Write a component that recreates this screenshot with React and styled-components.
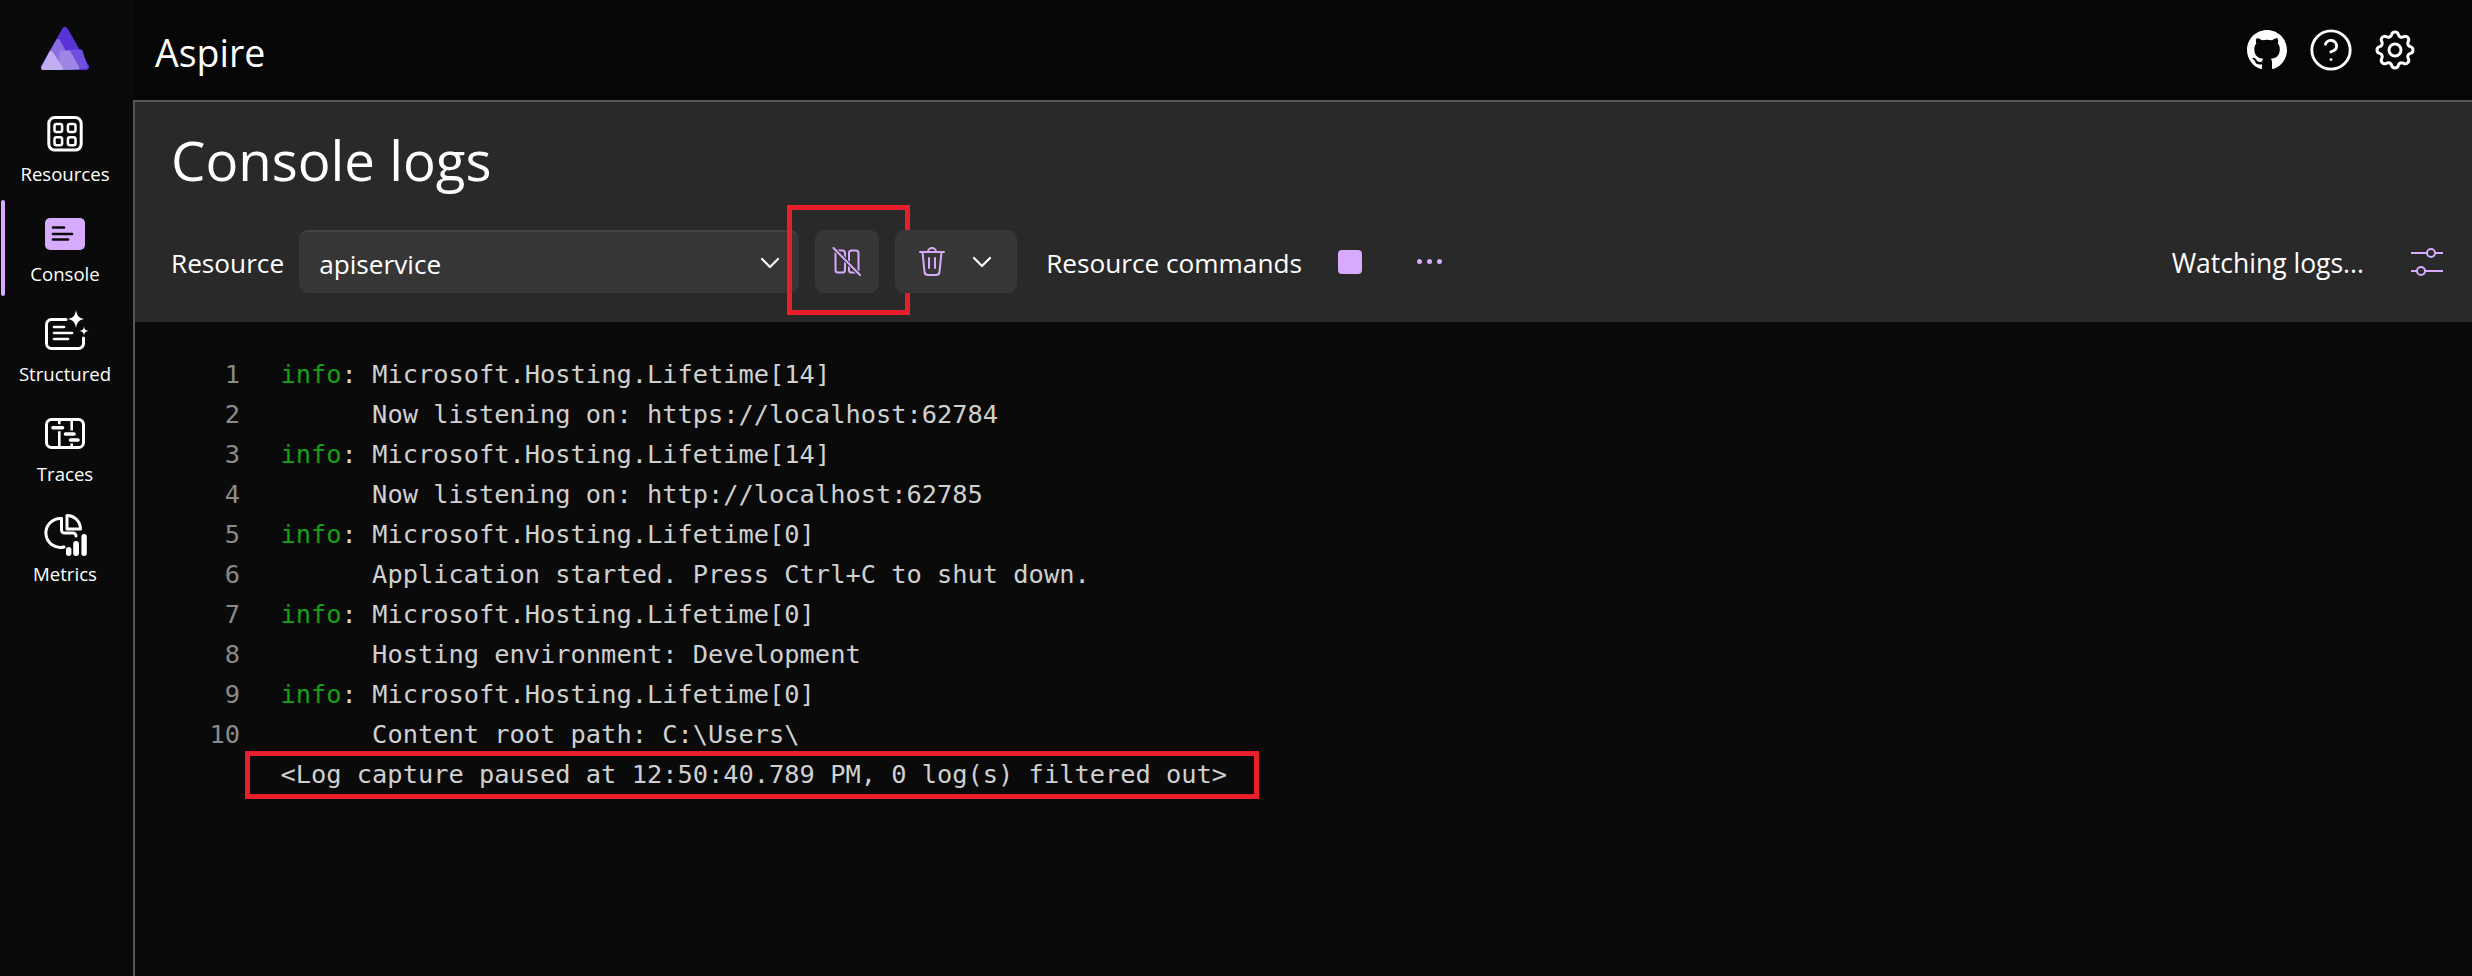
import React from 'react';
import styled, { createGlobalStyle } from 'styled-components';
import { BsGithub } from 'react-icons/bs';
import { TbSettings } from 'react-icons/tb';
import { LuCircleHelp } from 'react-icons/lu';

const ACCENT = '#d6aafc';
const UI_FONT = '"Open Sans", "Noto Sans", sans-serif';

const GlobalStyle = createGlobalStyle`
  html, body {
    margin: 0;
    padding: 0;
    background: #0a0a0a;
  }
  * {
    box-sizing: border-box;
  }
`;

const Shell = styled.div`
  display: grid;
  grid-template-columns: 133px 1fr;
  grid-template-rows: 100px 1fr;
  width: 2472px;
  height: 976px;
  overflow: hidden;
  background: #0a0a0a;
  color: #fff;
  font-family: ${UI_FONT};
`;

const LogoCell = styled.div`
  display: flex;
  align-items: flex-start;
  padding: 27px 0 0 41px;
`;

const Header = styled.header`
  display: flex;
  align-items: center;
  padding: 0 57px 0 22px;
  background: #060606;
`;

const Brand = styled.div`
  font-size: 37.5px;
  line-height: 44px;
  color: #fff;
  margin-top: 6px;
`;

const HeaderIcons = styled.div`
  display: flex;
  align-items: center;
  gap: 24px;
  margin-left: auto;
  color: #fff;
  margin-top: -1px;
`;

const Nav = styled.nav`
  display: flex;
  flex-direction: column;
  padding-right: 3px;
`;

const NavItem = styled.div`
  position: relative;
  display: flex;
  flex-direction: column;
  align-items: center;
  height: 100px;
  padding-top: 12px;

  &::before {
    content: '';
    display: ${p => (p.$active ? 'block' : 'none')};
    position: absolute;
    left: 1px;
    top: 0;
    width: 4px;
    height: 96px;
    border-radius: 2px;
    background: ${ACCENT};
  }
`;

const NavIcon = styled.svg`
  display: block;
  width: 44px;
  height: 44px;
  overflow: visible;
  flex: none;
`;

const NavLabel = styled.span`
  margin-top: 6px;
  font-size: 18.6px;
  line-height: 24px;
  color: #fff;
`;

const Main = styled.main`
  display: flex;
  flex-direction: column;
  min-width: 0;
  border-left: 2px solid #565656;
  border-top: 2px solid #565656;
  background: #0a0a0a;
`;

const TopPanel = styled.section`
  background: #292929;
  padding: 20px 29px 29px 36px;
`;

const Title = styled.h1`
  margin: 0 0 32px;
  font-size: 54.6px;
  font-weight: 400;
  line-height: 76px;
  color: #fff;
`;

const Toolbar = styled.div`
  display: flex;
  align-items: center;
  gap: 16px;
  height: 63px;
`;

const ToolLabel = styled.span`
  font-size: 26.2px;
  line-height: 36px;
  color: #fff;
  margin: 3px ${p => p.$gapRight || 0}px 0 ${p => p.$gapLeft || 0}px;
`;

const Select = styled.div`
  display: flex;
  align-items: center;
  justify-content: space-between;
  width: 500px;
  height: 63px;
  padding: 0 18px 0 20px;
  border-radius: 9px;
  background: #363636;
  border-top: 2px solid #434343;
  font-size: 26.2px;
  color: #fff;
`;

const SelectValue = styled.span`
  margin-top: 2px;
`;

const ToolButton = styled.div`
  position: relative;
  display: flex;
  align-items: center;
  justify-content: center;
  gap: ${p => p.$gap || 0}px;
  width: ${p => p.$width || 64}px;
  height: 63px;
  border-radius: 9px;
  background: ${p => (p.$flat ? 'transparent' : '#363636')};
`;

const Callout = styled.div`
  position: absolute;
  border: 5px solid #e81f2b;
  pointer-events: none;
`;

const ButtonCallout = styled(Callout)`
  left: -28px;
  top: -25px;
  width: 123px;
  height: 110px;
`;

const RowCallout = styled(Callout)`
  left: 110px;
  top: -3px;
  width: 1014px;
  height: 48px;
`;

const StopSquare = styled.span`
  display: block;
  width: 24px;
  height: 24px;
  border-radius: 4px;
  background: ${ACCENT};
`;

const Dots = styled.span`
  display: flex;
  gap: 5px;
  margin-top: -1px;
`;

const Dot = styled.i`
  display: block;
  width: 5px;
  height: 5px;
  border-radius: 50%;
  background: ${ACCENT};
`;

const WatchStatus = styled.div`
  display: flex;
  align-items: center;
  gap: 47px;
  margin-left: auto;
  font-size: 26.5px;
`;

const WatchText = styled.span`
  margin-top: 3px;
`;

const LogPanel = styled.section`
  padding-top: 32px;
  font-family: "DejaVu Sans Mono", "Liberation Mono", monospace;
  font-size: 25.37px;
  color: #d0d0d0;
`;

const LogRow = styled.div`
  position: relative;
  display: flex;
  gap: 40.5px;
  height: 40px;
  line-height: 40px;
  white-space: pre;
`;

const LineNumber = styled.span`
  flex: none;
  width: 105px;
  text-align: right;
  color: #8a8a8a;
`;

const Level = styled.span`
  color: #16a016;
`;

const Chevron = ({ color = '#fff' }) => (
  <svg width="22" height="14" viewBox="0 0 22 14" fill="none" stroke={color} strokeWidth="2.2" strokeLinecap="round" strokeLinejoin="round">
    <polyline points="3,3 11,11 19,3" />
  </svg>
);

const AspireLogo = () => (
  <svg width="48" height="43" viewBox="0 0 48 43" strokeLinejoin="round">
    <path d="M24 3 L45 40 H3 Z" fill="#5a33d6" stroke="#5a33d6" strokeWidth="6" />
    <path d="M28 24 H40 L45 40 H30 Z" fill="#6e4fe0" stroke="#6e4fe0" strokeWidth="3" />
    <path d="M17 14 L32 41 H8 L9 28 Z" fill="#8a6fe0" stroke="#8a6fe0" strokeWidth="4" />
    <path d="M20 25 H28 L37 41 H20 Z" fill="#9d86e6" stroke="#9d86e6" strokeWidth="3" />
    <path d="M10 26 L20 41 H2 Z" fill="#c0aef0" stroke="#c0aef0" strokeWidth="4" />
  </svg>
);

const ResourcesIcon = () => (
  <NavIcon viewBox="0 0 44 44" fill="none" stroke="#fff">
    <rect x="5.8" y="5.5" width="32.4" height="32.6" rx="6" strokeWidth="3" />
    <rect x="11.5" y="12" width="7.6" height="8" rx="2" strokeWidth="2.5" />
    <rect x="24.9" y="12" width="7.6" height="8" rx="2" strokeWidth="2.5" />
    <rect x="11.5" y="25.2" width="7.6" height="8" rx="2" strokeWidth="2.5" />
    <rect x="24.9" y="25.2" width="7.6" height="8" rx="2" strokeWidth="2.5" />
  </NavIcon>
);

const ConsoleIcon = () => (
  <NavIcon viewBox="0 0 44 44" fill="none">
    <rect x="2" y="6" width="40" height="32" rx="5" fill={ACCENT} />
    <g stroke="#0a0a0a" strokeWidth="2.6" strokeLinecap="round">
      <line x1="10" y1="15.5" x2="21" y2="15.5" />
      <line x1="10" y1="22" x2="29" y2="22" />
      <line x1="10" y1="27.5" x2="25" y2="27.5" />
    </g>
  </NavIcon>
);

const StructuredIcon = () => (
  <NavIcon viewBox="0 0 44 44" fill="none" stroke="#fff">
    <path d="M23 7.5 H8.5 a5 5 0 0 0 -5 5 V31.5 a5 5 0 0 0 5 5 H35.5 a5 5 0 0 0 5 -5 V26" strokeWidth="3" strokeLinecap="round" />
    <g strokeWidth="2.6" strokeLinecap="round">
      <line x1="11" y1="15" x2="21" y2="15" />
      <line x1="11" y1="21" x2="29" y2="21" />
      <line x1="11" y1="27" x2="25" y2="27" />
    </g>
    <path d="M33 -2 C34 4 36 6 41 7 C36 8 34 10 33 16 C32 10 30 8 25 7 C30 6 32 4 33 -2 Z" fill="#fff" stroke="none" />
    <path d="M41 14.5 C41.5 17.5 42.5 18.5 45.5 19 C42.5 19.5 41.5 20.5 41 23.5 C40.5 20.5 39.5 19.5 36.5 19 C39.5 18.5 40.5 17.5 41 14.5 Z" fill="#fff" stroke="none" />
  </NavIcon>
);

const TracesIcon = () => (
  <NavIcon viewBox="0 0 44 44" fill="none" stroke="#fff">
    <rect x="3.5" y="7.5" width="37" height="28" rx="5" strokeWidth="3" />
    <line x1="16.3" y1="7" x2="16.3" y2="36" strokeWidth="2.6" />
    <line x1="28.7" y1="7" x2="28.7" y2="36" strokeWidth="2.6" />
    <g strokeLinecap="round">
      <line x1="10" y1="15.7" x2="19.5" y2="15.7" stroke="#0a0a0a" strokeWidth="7" />
      <line x1="22.5" y1="22" x2="31" y2="22" stroke="#0a0a0a" strokeWidth="7" />
      <line x1="27.5" y1="28" x2="35" y2="28" stroke="#0a0a0a" strokeWidth="7" />
      <line x1="10" y1="15.7" x2="19.5" y2="15.7" strokeWidth="3.6" />
      <line x1="22.5" y1="22" x2="31" y2="22" strokeWidth="3.6" />
      <line x1="27.5" y1="28" x2="35" y2="28" strokeWidth="3.6" />
    </g>
  </NavIcon>
);

const MetricsIcon = () => (
  <NavIcon viewBox="0 0 44 44" fill="none" stroke="#fff" strokeWidth="3" strokeLinecap="round" strokeLinejoin="round">
    <path d="M18.5 6.5 A14.5 14.5 0 1 0 21 35" />
    <path d="M18.5 6.5 V18 a3 3 0 0 0 3 3 H30 a3 3 0 0 1 3 3" />
    <path d="M24 3.5 V17 H37.5 A13.5 13.5 0 0 0 24 3.5 Z" />
    <g fill="#fff" stroke="none">
      <rect x="23" y="35" width="5.4" height="9" rx="2.7" />
      <rect x="30.2" y="29" width="5.8" height="15" rx="2.9" />
      <rect x="38.4" y="22" width="5.4" height="22" rx="2.7" />
    </g>
  </NavIcon>
);

const PauseOffIcon = () => (
  <svg width="30" height="30" viewBox="0 0 30 30" fill="none" stroke={ACCENT} strokeWidth="2" strokeLinecap="round" strokeLinejoin="round">
    <rect x="3.5" y="3.5" width="9.5" height="22" rx="2.6" />
    <rect x="17" y="3.5" width="9.5" height="22" rx="2.6" />
    <line x1="1.5" y1="1" x2="28" y2="28" stroke="#363636" strokeWidth="4" />
    <line x1="1.5" y1="1" x2="28" y2="28" strokeWidth="2" />
  </svg>
);

const TrashIcon = () => (
  <svg width="26" height="30" viewBox="0 0 26 30" fill="none" stroke={ACCENT} strokeWidth="2" strokeLinecap="round" strokeLinejoin="round">
    <path d="M1 5 H25" />
    <path d="M9 5 A4 4 0 0 1 17 5" />
    <path d="M3.5 5 L5.5 25 A3.5 3.5 0 0 0 9 28 H17 A3.5 3.5 0 0 0 20.5 25 L22.5 5" />
    <line x1="10" y1="11" x2="10" y2="21" />
    <line x1="16" y1="11" x2="16" y2="21" />
  </svg>
);

const FilterIcon = () => (
  <svg width="32" height="32" viewBox="0 0 32 32" fill="none" stroke={ACCENT} strokeWidth="2" strokeLinecap="round">
    <line x1="0.5" y1="7" x2="16" y2="7" />
    <line x1="24" y1="7" x2="31.5" y2="7" />
    <circle cx="20" cy="7" r="4" />
    <line x1="0.5" y1="25" x2="6" y2="25" />
    <line x1="14" y1="25" x2="31.5" y2="25" />
    <circle cx="10" cy="25" r="4" />
  </svg>
);

const navItems = [
  { label: 'Resources', Icon: ResourcesIcon },
  { label: 'Console', Icon: ConsoleIcon, active: true },
  { label: 'Structured', Icon: StructuredIcon },
  { label: 'Traces', Icon: TracesIcon },
  { label: 'Metrics', Icon: MetricsIcon },
];

const logLines = [
  { level: 'info', text: 'Microsoft.Hosting.Lifetime[14]' },
  { text: 'Now listening on: https://localhost:62784' },
  { level: 'info', text: 'Microsoft.Hosting.Lifetime[14]' },
  { text: 'Now listening on: http://localhost:62785' },
  { level: 'info', text: 'Microsoft.Hosting.Lifetime[0]' },
  { text: 'Application started. Press Ctrl+C to shut down.' },
  { level: 'info', text: 'Microsoft.Hosting.Lifetime[0]' },
  { text: 'Hosting environment: Development' },
  { level: 'info', text: 'Microsoft.Hosting.Lifetime[0]' },
  { text: 'Content root path: C:\\Users\\' },
];

export default function App() {
  return (
    <Shell>
      <GlobalStyle />
      <LogoCell>
        <AspireLogo />
      </LogoCell>
      <Header>
        <Brand>Aspire</Brand>
        <HeaderIcons>
          <BsGithub size={40} />
          <LuCircleHelp size={46} strokeWidth={1.5} style={{ margin: '0 -3px' }} />
          <TbSettings size={48} strokeWidth={1.5} style={{ margin: '0 -4px' }} />
        </HeaderIcons>
      </Header>
      <Nav>
        {navItems.map(({ label, Icon, active }) => (
          <NavItem key={label} $active={active}>
            <Icon />
            <NavLabel>{label}</NavLabel>
          </NavItem>
        ))}
      </Nav>
      <Main>
        <TopPanel>
          <Title>Console logs</Title>
          <Toolbar>
            <ToolLabel $gapRight={-1}>Resource</ToolLabel>
            <Select>
              <SelectValue>apiservice</SelectValue>
              <Chevron />
            </Select>
            <ToolButton>
              <PauseOffIcon />
              <ButtonCallout />
            </ToolButton>
            <ToolButton $width={122} $gap={26}>
              <TrashIcon />
              <Chevron />
            </ToolButton>
            <ToolLabel $gapLeft={13}>Resource commands</ToolLabel>
            <ToolButton $flat>
              <StopSquare />
            </ToolButton>
            <ToolButton $flat>
              <Dots>
                <Dot />
                <Dot />
                <Dot />
              </Dots>
            </ToolButton>
            <WatchStatus>
              <WatchText>Watching logs...</WatchText>
              <FilterIcon />
            </WatchStatus>
          </Toolbar>
        </TopPanel>
        <LogPanel>
          {logLines.map((line, i) => (
            <LogRow key={i}>
              <LineNumber>{i + 1}</LineNumber>
              <span>
                {line.level ? <><Level>{line.level}</Level>{': '}</> : '      '}
                {line.text}
              </span>
            </LogRow>
          ))}
          <LogRow>
            <LineNumber />
            <span>{'<Log capture paused at 12:50:40.789 PM, 0 log(s) filtered out>'}</span>
            <RowCallout />
          </LogRow>
        </LogPanel>
      </Main>
    </Shell>
  );
}
